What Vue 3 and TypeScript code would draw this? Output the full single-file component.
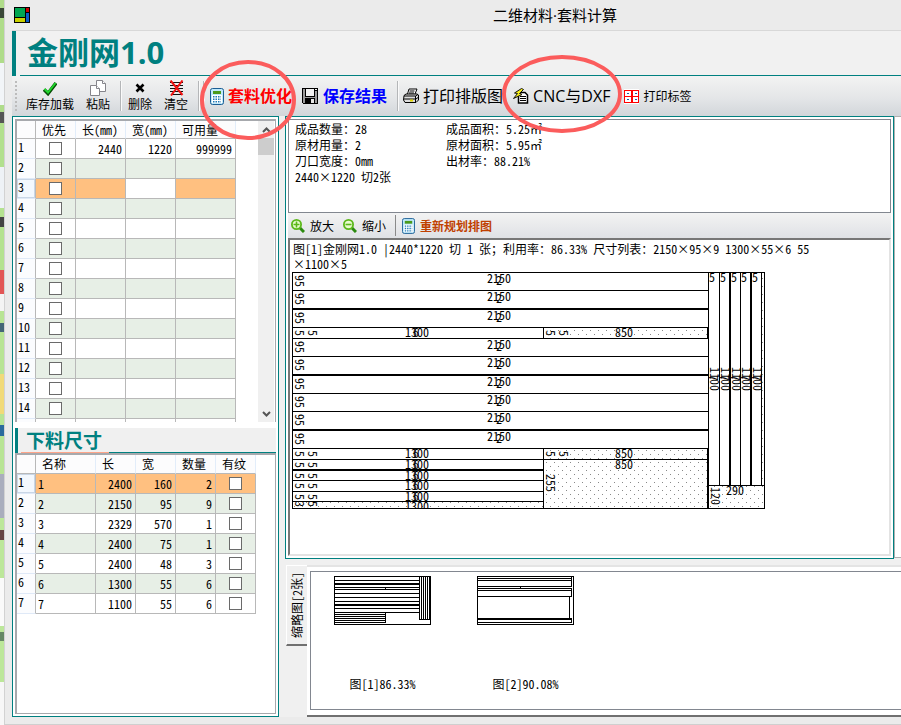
<script setup lang="ts">
import { h, ref } from 'vue'

interface StockRow { use: boolean; length: string; width: string; count: string }
interface PartRow { name: string; length: string; width: string; qty: string; grain: boolean }
interface Label { x: number; y: number; text: string; turn?: boolean }

// Splits a string so that Latin runs are set in half-width forms beside full-width CJK.
const Mixed = (props: { t: string }) =>
  h('span', (props.t.match(/[\x20-\x7e]+|[^\x20-\x7e]+/g) ?? []).map((run) =>
    /[\x20-\x7e]/.test(run) ? h('span', { class: 'latin' }, run) : run))
Mixed.props = ['t']

const stock = ref<StockRow[]>(
  Array.from({ length: 14 }, (_, i) => ({
    use: false,
    length: i === 0 ? '2440' : '',
    width: i === 0 ? '1220' : '',
    count: i === 0 ? '999999' : '',
  })),
)
const parts = ref<PartRow[]>(
  [
    ['1', '2400', '160', '2'], ['2', '2150', '95', '9'], ['3', '2329', '570', '1'],
    ['4', '2400', '75', '1'], ['5', '2400', '48', '3'], ['6', '1300', '55', '6'],
    ['7', '1100', '55', '6'],
  ].map(([name, length, width, qty]) => ({ name, length, width, qty, grain: false })),
)

const summary = [
  ['成品数量：28', '成品面积：5.25㎡'],
  ['原材用量：2', '原材面积：5.95㎡'],
  ['刀口宽度：0mm', '出材率：88.21%'],
  ['2440×1220 切2张', ''],
]

// Cutting plan, in drawing units with the sheet's corner at 0,0.
const longRows = [0, 18, 37, 66, 84, 103, 121, 139, 158]
const shortRows = [55, 176, 187, 198, 208, 219]
const columns = [416, 427, 438, 448, 459]
const waste = [
  [251, 55, 165, 11], [251, 176, 165, 11], [251, 187, 165, 49],
  [416, 213, 56, 23], [0, 229, 251, 7], [469, 0, 3, 213],
]
const hLines = [
  [18, 416, 1], [36, 416, 2], [55, 416, 1], [66, 416, 1], [84, 416, 1], [102, 416, 2], [121, 416, 1],
  [139, 416, 1], [157, 416, 2], [176, 416, 1], [187, 416, 1], [197, 251, 2], [208, 251, 1],
  [219, 251, 1], [229, 251, 1],
]
const vLines = [
  [416, 0, 236, 1], [427, 0, 213, 1], [437, 0, 213, 2], [448, 0, 213, 1], [458, 0, 213, 2], [469, 0, 213, 1],
  [251, 55, 11, 1], [251, 176, 60, 1], [415, 55, 11, 1], [415, 176, 60, 1],
]
const labels: Label[] = [
  ...longRows.flatMap((y) => [
    { x: 195, y: y + 11, text: '2150' },
    { x: 204, y: y + 13, text: '2' },
    { x: 3, y: y + 3, text: '95', turn: true },
  ]),
  ...shortRows.flatMap((y) => [
    { x: 113, y: y + 10, text: '1300' },
    { x: 121, y: y + 10, text: '6' },
    { x: 3, y: y + 3, text: '5', turn: true },
    { x: 16, y: y + 3, text: '5', turn: true },
  ]),
  { x: 3, y: 229, text: '3', turn: true },
  { x: 16, y: 229, text: '5', turn: true },
  { x: 113, y: 239, text: '1300' },
  ...[55, 176].flatMap((y) => [
    { x: 254, y: y + 3, text: '5', turn: true },
    { x: 267, y: y + 3, text: '5', turn: true },
    { x: 323, y: y + 10, text: '850' },
  ]),
  { x: 323, y: 197, text: '850' },
  { x: 254, y: 202, text: '255', turn: true },
  ...columns.flatMap((x) => [
    { x: x + 1, y: 10, text: '5' },
    { x: x + 2, y: 95, text: '1100', turn: true },
    { x: x + 1, y: 103, text: '7', turn: true },
  ]),
  { x: 419, y: 215, text: '120', turn: true },
  { x: 434, y: 223, text: '290' },
]
</script>

<template>
  <div class="desktop">
    <div class="window">
      <header class="titlebar">
        <svg class="app-icon" width="16" height="16" viewBox="0 0 16 16" shape-rendering="crispEdges">
          <path fill="#000" d="M0 0h16v16H0z" />
          <path fill="#00a651" d="M1 1h10v9H1z" />
          <path fill="#c8d000" d="M1 11h10v4H1z" />
          <path fill="#c80000" d="M12 1h3v4h-3z" />
          <path fill="#0a5cc8" d="M12 6h3v9h-3z" />
        </svg>
        <span class="title">二维材料·套料计算</span>
      </header>

      <div class="client">
        <div class="brand"><h1>金刚网1.0</h1></div>

        <nav class="toolbar">
          <i class="grip"></i>
          <button class="tool stacked">
            <svg width="14" height="14" viewBox="0 0 14 14"><path d="M1 8.500l4 4L13 2" fill="none" stroke="#064d06" stroke-width="3.600" /><path d="M1.500 8l3.500 3.500L12.500 2" fill="none" stroke="#1fd62c" stroke-width="2" /></svg>
            库存加载
          </button>
          <button class="tool stacked">
            <svg width="17" height="16" viewBox="0 0 17 16"><g fill="#fff" stroke="#85858b"><path d="M6.500.500h6l3 3v8h-9z" /><path d="M12.500.500v3h3" /><path d="M.500 5.500h6l3 3v7h-9z" /><path d="M6.500 5.500v3h3" /></g></svg>
            粘贴
          </button>
          <i class="sep"></i>
          <button class="tool stacked">
            <svg width="10" height="14" viewBox="0 0 10 14"><path d="M1.500 3.500l7 7M8.500 3.500l-7 7" stroke="#000" stroke-width="2.600" /></svg>
            删除
          </button>
          <button class="tool stacked">
            <svg width="15" height="16" viewBox="0 0 15 16"><path d="M1 2.500h13M1 5.500h13M1 8.500h13M1 11.500h13M3 14.500h9" stroke="#111" stroke-width="1" /><path d="M1.500.500l12 14.500M13.500.500L2 15.500" stroke="#f01010" stroke-width="2" /></svg>
            清空
          </button>
          <i class="sep"></i><i class="sep near"></i>
          <button class="tool big red">
            <svg width="14" height="17" viewBox="0 0 14 17"><rect x=".5" y=".5" width="13" height="16" rx="2" fill="#bfe9fb" stroke="#1b5d94" /><path fill="#4a9a1c" d="M3 3h8v3H3z" /><path fill="#fff" d="M2 7h10v8H2z" /><path stroke="#1d7ab8" stroke-width="1.400" stroke-dasharray="1.500 1" d="M3 8.700h8M3 11.200h8M3 13.700h8" /></svg>
            套料优化
          </button>
          <button class="tool big blue">
            <svg width="16" height="16" viewBox="0 0 16 16" shape-rendering="crispEdges"><path fill="#000" d="M0 0h16v16H1l-1-1z" /><path fill="#9b9b9b" d="M1 1h2v8h10V3h2v12H1z" /><path fill="#f2f2f2" d="M4 1h8v7H4zM13 1h2v1h-2z" /><path fill="#000" d="M3 10h10v6H3z" /><path fill="#e8e8e8" d="M9 11h3v4H9z" /></svg>
            保存结果
          </button>
          <i class="sep close"></i>
          <button class="tool big print">
            <svg width="16" height="16" viewBox="0 0 16 16"><path d="M4.500 6L6 1h8l-2 5" fill="#fff" stroke="#000" /><path d="M6.500 3h5M6 5h5" stroke="#000" /><path d="M1 7.500L3 6h11l1.500 1v5L13 14.500H2L.500 12z" fill="#ddd" stroke="#000" /><path d="M1 8h11.500v6M1 11h11M12.500 8l2.500-1.500M13 11l2-1.500" fill="none" stroke="#000" /><path d="M7 12.500h3" stroke="#e2d600" stroke-width="2" /></svg>
            打印排版图
          </button>
          <button class="tool big print">
            <svg width="16" height="16" viewBox="0 0 16 16"><path d="M5.500 7v8h9V7L12 4.500H8z" fill="#fff" stroke="#000" stroke-width="1.500" /><path d="M7 8.500h6M7 10.500h6M7 12.500h6" stroke="#000" /><path d="M8.500.500L1.500 5l3 .5L.500 10.500 9 6.500 6.500 5.500l4-4z" fill="#f6ee18" stroke="#111" /></svg>
            CNC与DXF
          </button>
          <button class="tool tags">
            <svg width="15" height="15" viewBox="0 0 15 15" shape-rendering="crispEdges"><path fill="#fff" d="M0 0h15v15H0z" /><path fill="#f00" d="M0 1h15v1H0zM0 7h15v1H0zM0 13h15v1H0zM0 1h1v13H0zM14 1h1v13h-1zM7 1h2v13H7z" /><path fill="#2355a0" d="M3 4h2v1H3zM11 4h2v1h-2zM3 10h2v1H3zM11 10h2v1h-2z" /></svg>
            打印标签
          </button>
        </nav>

        <main class="main">
          <section class="left-panel">
            <div class="grid-box stock">
              <table>
                <colgroup><col class="w19" /><col class="w40" /><col class="w50" /><col class="w50" /><col class="w60" /></colgroup>
                <thead><tr><th></th><th>优先</th><th><Mixed t="长(mm)" /></th><th><Mixed t="宽(mm)" /></th><th>可用量</th></tr></thead>
                <tbody>
                  <tr v-for="(r, i) in stock" :key="i" :class="{ current: i === 2 }">
                    <th>{{ i + 1 }}</th>
                    <td class="tick"><input v-model="r.use" type="checkbox" :aria-label="`优先 ${i + 1}`" /></td>
                    <td>{{ r.length }}</td>
                    <td :class="{ focus: i === 2 }">{{ r.width }}</td>
                    <td>{{ r.count }}</td>
                  </tr>
                  <tr class="more"><th></th><td></td><td></td><td></td><td></td></tr>
                </tbody>
              </table>
              <div class="scroll">
                <button aria-label="向上"><svg width="9" height="6" viewBox="0 0 9 6"><path d="M1 5l3.500-3.500L8 5" /></svg></button>
                <i class="thumb"></i>
                <button aria-label="向下"><svg width="9" height="6" viewBox="0 0 9 6"><path d="M1 1l3.500 3.500L8 1" /></svg></button>
              </div>
            </div>

            <h2><span>下料尺寸</span></h2>

            <div class="grid-box parts">
              <table>
                <colgroup><col class="w19" /><col class="w60" /><col class="w40" /><col class="w40" /><col class="w40" /><col class="w40" /></colgroup>
                <thead><tr><th></th><th>名称</th><th>长</th><th>宽</th><th>数量</th><th>有纹</th></tr></thead>
                <tbody>
                  <tr v-for="(p, i) in parts" :key="p.name" :class="{ current: i === 0 }">
                    <th>{{ i + 1 }}</th>
                    <td class="name">{{ p.name }}</td>
                    <td>{{ p.length }}</td>
                    <td>{{ p.width }}</td>
                    <td>{{ p.qty }}</td>
                    <td class="tick"><input v-model="p.grain" type="checkbox" :aria-label="`有纹 ${p.name}`" /></td>
                  </tr>
                </tbody>
              </table>
            </div>
          </section>

          <section class="right">
            <div class="upper">
              <div class="plan-panel">
                <div class="summary">
                  <template v-for="(line, i) in summary" :key="i">
                    <Mixed :t="line[0]" /><Mixed :t="line[1]" />
                  </template>
                </div>
                <div class="plan-tools">
                  <button class="tool">
                    <svg width="14" height="14" viewBox="0 0 14 14"><path d="M9 9l4 4" stroke="#2c8a10" stroke-width="3" /><circle cx="5.500" cy="5.500" r="4.600" fill="#eafbd0" stroke="#5cb81a" stroke-width="1.800" /><path d="M2.500 5.500h6M5.500 2.500v6" stroke="#5cb81a" stroke-width="1.600" /></svg>
                    放大
                  </button>
                  <button class="tool">
                    <svg width="14" height="14" viewBox="0 0 14 14"><path d="M9 9l4 4" stroke="#2c8a10" stroke-width="3" /><circle cx="5.500" cy="5.500" r="4.600" fill="#eafbd0" stroke="#5cb81a" stroke-width="1.800" /><path d="M2.500 5.500h6" stroke="#5cb81a" stroke-width="1.600" /></svg>
                    缩小
                  </button>
                  <i class="rule"></i>
                  <button class="tool replan">
                    <svg width="13" height="16" viewBox="0 0 14 17"><rect x=".5" y=".5" width="13" height="16" rx="2" fill="#bfe9fb" stroke="#1b5d94" /><path fill="#4a9a1c" d="M3 3h8v3H3z" /><path fill="#fff" d="M2 7h10v8H2z" /><path stroke="#1d7ab8" stroke-width="1.400" stroke-dasharray="1.500 1" d="M3 8.700h8M3 11.200h8M3 13.700h8" /></svg>
                    重新规划排图
                  </button>
                </div>
                <div class="canvas">
                  <p><Mixed t="图[1]金刚网1.0 |2440*1220 切 1 张；利用率：86.33% 尺寸列表：2150×95×9 1300×55×6 55" /></p>
                  <p><Mixed t="×1100×5" /></p>
                  <svg class="plan" width="473" height="237" viewBox="0 0 473 237">
                    <defs>
                      <pattern id="dots" width="8" height="8" patternUnits="userSpaceOnUse">
                        <path fill="#888" d="M2 2h1v1H2zM6 6h1v1H6z" />
                      </pattern>
                    </defs>
                    <g shape-rendering="crispEdges">
                      <rect v-for="(w, i) in waste" :key="i" :x="w[0]" :y="w[1]" :width="w[2]" :height="w[3]" fill="url(#dots)" />
                      <rect v-for="(l, i) in hLines" :key="`h${i}`" x="0" :y="l[0]" :width="l[1]" :height="l[2]" />
                      <rect v-for="(l, i) in vLines" :key="`v${i}`" :x="l[0]" :y="l[1]" :width="l[3]" :height="l[2]" />
                      <path d="M416 213h56v1h-56z" />
                      <rect x=".5" y=".5" width="472" height="236" fill="none" stroke="#000" />
                    </g>
                    <text v-for="(l, i) in labels" :key="`t${i}`" :transform="`translate(${l.x} ${l.y})${l.turn ? ' rotate(90)' : ''}`">{{ l.text }}</text>
                  </svg>
                </div>
              </div>
              <div class="side"></div>
            </div>

            <div class="lower">
              <button class="tab"><Mixed t="缩略图[2张]" /></button>
              <div class="page">
                <div class="thumbs">
                  <figure>
                    <svg width="97" height="49" viewBox="0 0 97 49" shape-rendering="crispEdges">
                      <path d="M0 .500h97M0 48.500h97M.500 0v49M96.500 0v49M0 4.500h85M0 11.500h85M0 13.500h85M0 17.500h85M0 21.500h85M0 25.500h85M0 32.500h85M0 36.500h85M0 38.500h51M0 40.500h51M0 42.500h51M0 44.500h51M0 46.500h51M51.500 11v3M51.500 36v11M85.500 0v44M87.500 0v44M89.500 0v44M91.500 0v44M93.500 0v44M95.500 0v44M85 43.500h11" />
                      <path stroke-width="2" d="M0 8h85M0 29h85" />
                    </svg>
                    <figcaption><Mixed t="图[1]86.33%" /></figcaption>
                  </figure>
                  <figure>
                    <svg width="97" height="49" viewBox="0 0 97 49" shape-rendering="crispEdges">
                      <path d="M0 .500h97M0 48.500h97M.500 0v49M96.500 0v49M0 2.500h95M0 4.500h95M0 10.500h95M0 12.500h95M0 14.500h95M0 20.500h95M0 46.500h95M43.500 10v2M94.500 0v11M94.500 12v9M92.500 20v23M94.500 43v4" />
                      <path stroke-width="2" d="M0 43h95" />
                    </svg>
                    <figcaption><Mixed t="图[2]90.08%" /></figcaption>
                  </figure>
                </div>
              </div>
            </div>
          </section>
        </main>
      </div>
    </div>

    <svg class="marks" width="901" height="160" viewBox="0 0 901 160" aria-hidden="true">
      <ellipse cx="248" cy="100" rx="46" ry="38" />
      <ellipse cx="562" cy="94" rx="58" ry="37" />
    </svg>
  </div>
</template>

<style>
body { margin: 0; overflow: hidden; }
.latin { font-feature-settings: "hwid"; }
</style>

<style scoped>
* { box-sizing: border-box; }
.desktop {
  position: relative;
  display: flex;
  height: 100vh;
  padding-left: 4px;
  font: 12px/16px "Noto Sans CJK SC", sans-serif;
  color: #000;
  overflow: hidden;
  background: linear-gradient(
    #afdc8a 0 8px, #3a4838 8px 18px, #afdc8a 18px 63px, #f2f5f8 63px 105px, #afdc8a 105px 112px,
    #555 112px 123px, #b2e08e 123px 167px, #eef2f6 167px 208px, #b4e290 208px 217px, #444 217px 227px,
    #b4e290 227px 270px, #e25656 270px 294px, #f4f4f4 294px 311px, #b8e494 311px 323px, #467 323px 332px,
    #b8e494 332px 374px, #f1da78 374px 414px, #b8e494 414px 425px, #2a6a9c 425px 436px, #b8e494 436px 474px,
    #a9adbd 474px 518px, #bce79a 518px 530px, #644 530px 540px, #bce79a 540px 578px, #fafafa 578px 626px,
    #bce79a 626px 632px, #686 632px 641px, #bce79a 641px 682px, #f7f7f7 682px);
}
.window {
  flex: 1;
  min-width: 0;
  display: flex;
  flex-direction: column;
  border-left: 1px solid #d2d2d2;
  border-bottom: 1px solid #cfcfcf;
  background: #ebebeb;
}
.titlebar { flex: none; display: flex; height: 30px; padding-left: 9px; align-items: center; }
.title { margin-left: 463px; font: 15px/20px "Open Sans", "Noto Sans CJK SC", sans-serif; white-space: nowrap; }
.client {
  flex: 1;
  min-height: 0;
  display: flex;
  flex-direction: column;
  margin: 0 0 7px 7px;
  border-top: 1px solid #d8d8d8;
  background: #f0f0f0;
}
.brand { flex: none; height: 45px; border-left: 4px solid #008080; padding-left: 4px; background: #f1f1f1; }
h1 {
  height: 45px;
  margin: 0;
  padding-left: 7px;
  border-bottom: 1px solid #008080;
  font: bold 31px/42px "Open Sans", "Noto Sans CJK SC", sans-serif;
  color: #008080;
}
button { margin: 0; padding: 0; border: 0; background: none; color: inherit; font: inherit; }
svg { flex: none; display: block; }

.toolbar {
  flex: none;
  display: flex;
  align-items: center;
  height: 40px;
  padding-left: 3px;
  background: linear-gradient(#f3f3f3, #e4e6e8 55%, #d2d6da);
}
.grip { width: 2px; height: 30px; margin-right: 9px; background: repeating-linear-gradient(#bcbcbc 0 2px, transparent 2px 4px); }
.tool { flex: none; display: flex; align-items: center; gap: 4px; white-space: nowrap; }
.stacked { flex-direction: column; gap: 0; height: 32px; justify-content: space-between; margin-right: 12px; line-height: 16px; }
.stacked svg { height: 16px; }
.stacked + .sep { margin-left: -2px; }
.sep { width: 2px; height: 30px; margin-right: 6px; border-left: 1px solid #b4b6b8; border-right: 1px solid #fafafa; }
.near { margin: 0 5px 0 -3px; }
.big { gap: 5px; margin-right: 10px; font: 16px/24px "Open Sans", "Noto Sans CJK SC", sans-serif; }
.red { gap: 4px; color: #f00; font-weight: bold; }
.blue { color: #00f; font-weight: bold; }
.close { margin-right: 4px; }
.print { gap: 4px; }
.tags { margin-left: 4px; }

.main { flex: 1; min-height: 0; display: grid; grid-template-columns: 267px minmax(0, 1fr); gap: 6px; }
.left-panel {
  display: flex;
  flex-direction: column;
  min-height: 0;
  padding: 2px;
  border: 1px solid #008080;
  background: #fff;
}
.grid-box { position: relative; border: 1px solid #a7a9ad; border-width: 2px 1px 1px 2px; overflow: hidden; background: #fff; }
.stock { flex: none; height: 303px; border-bottom: 0; display: flex; justify-content: space-between; }
.parts { flex: 1; min-height: 0; }
table { align-self: flex-start; flex: none; table-layout: fixed; width: 0; border-spacing: 0; border-collapse: separate; }
.w19 { width: 19px; }
.w40 { width: 40px; }
.w50 { width: 50px; }
.w60 { width: 60px; }
th, td { padding: 0; border: 0 solid #b8b8b8; border-width: 0 1px 1px 0; white-space: nowrap; overflow: hidden; }
th { font-weight: normal; text-align: left; }
thead th { height: 18px; padding-left: 6px; line-height: 16px; border-right-color: #e2edfa; background: #fcfcfd; }
thead th:first-child { padding: 0; border-right-color: #b8b8b8; }
.parts thead th { height: 19px; }
tbody th, td { height: 20px; font-feature-settings: "hwid"; }
tbody th { padding-left: 1px; vertical-align: top; line-height: 16px; border-bottom-color: #dfe9f7; background: #fbfcfe; }
td { padding-right: 3px; text-align: right; line-height: 19px; }
tbody tr:nth-child(even) td { background: #e7efe6; }
tbody tr.current td { background: #ffc080; }
tbody tr.current td.focus { background: #fff; }
tbody tr.current th { background: #f3f8fe; box-shadow: inset 0 0 0 1px #c9d6e6; }
td.name { padding-left: 2px; text-align: left; }
td.tick { padding: 0; }
input { display: block; appearance: none; width: 13px; height: 13px; margin: 0 auto; border: 1px solid #6a6a6a; background: #fff; }
input:checked { background: #6a6a6a; }
.scroll { width: 17px; display: flex; flex-direction: column; background: #f0f0f0; }
.scroll button { height: 17px; display: flex; align-items: center; justify-content: center; }
.scroll path { fill: none; stroke: #555; stroke-width: 2; }
.thumb { height: 17px; margin-bottom: auto; background: #cdcdcd; }
.stock .scroll { border-right: 1px solid #fff; }
h2 {
  flex: none;
  display: flex;
  height: 25px;
  margin: 6px 0 0;
  padding-left: 3px;
  border-left: 3px solid #008080;
  background: linear-gradient(#008080, #008080) 3px 100% / 100% 1px no-repeat #f0f0f0;
  font: bold 19px/24px "Noto Sans CJK SC", sans-serif;
  color: #008080;
}
h2 span { padding: 0 7px 0 5px; border-bottom: 1px solid #ffa58a; }

.right { min-width: 0; display: flex; flex-direction: column; }
.upper { flex: 1; min-height: 0; display: flex; }
.plan-panel { flex: 1; min-width: 0; display: flex; flex-direction: column; padding: 2px; border: 1px solid #008080; background: #fff; }
.summary {
  flex: none;
  display: grid;
  grid-template-columns: 151px 1fr;
  grid-auto-rows: 16px;
  height: 94px;
  padding: 1px 6px;
  border: 1px solid #828790;
  white-space: nowrap;
}
.plan-tools {
  flex: none;
  display: flex;
  align-items: center;
  gap: 9px;
  height: 25px;
  padding-left: 3px;
  background: linear-gradient(#f3f3f3, #dfe1e5);
}
.plan-tools .tool { gap: 5px; }
.rule { width: 1px; height: 21px; background: #8a8a8a; margin-right: -3px; }
.replan { color: #c04000; font-weight: bold; }
.canvas {
  flex: 1;
  min-height: 0;
  overflow: hidden;
  padding: 1px 2px;
  border: 2px solid #e3e3e3;
  border-top-color: #777;
  border-left-color: #777;
}
.canvas p { height: 15px; margin: 0; padding-left: 1px; line-height: 15px; white-space: pre; }
.plan { margin-top: 1px; overflow: hidden; }
.plan text { font: 12px "Noto Sans CJK SC", sans-serif; font-feature-settings: "hwid"; }
.side { flex: none; width: 7px; margin-bottom: 1px; border: 1px solid #b0b0b0; border-right: 0; background: #fff; }

.lower { flex: none; display: flex; height: 152px; margin-top: 6px; align-items: flex-start; }
.tab {
  flex: none;
  width: 21px;
  height: 81px;
  margin-left: 1px;
  border: 1px solid #fff;
  border-right: 0;
  border-bottom: 2px solid #707070;
  background: #f0f0f0;
}
.tab span { display: block; margin: 0 auto; writing-mode: vertical-rl; text-orientation: sideways; transform: rotate(180deg); line-height: 18px; }
.page { flex: 1; min-width: 0; height: 152px; padding: 6px 0 6px 3px; border-top: 2px solid #e4e4e4; border-bottom: 2px solid #707070; background: #fff; }
.thumbs { display: flex; gap: 46px; height: 139px; margin-top: -2px; padding: 4px 0 0 23px; border: 1px solid #828790; border-right: 0; }
figure { width: 97px; margin: 0; display: flex; flex-direction: column; gap: 51px; }
figure svg { background: #fff; stroke: #000; fill: none; }
figcaption { text-align: center; white-space: nowrap; }

/* Hand-drawn callouts laid over the toolbar. */
.marks { position: absolute; left: 0; top: 0; pointer-events: none; }
.marks ellipse { fill: none; stroke: #fb5c5c; stroke-width: 4; }
</style>
